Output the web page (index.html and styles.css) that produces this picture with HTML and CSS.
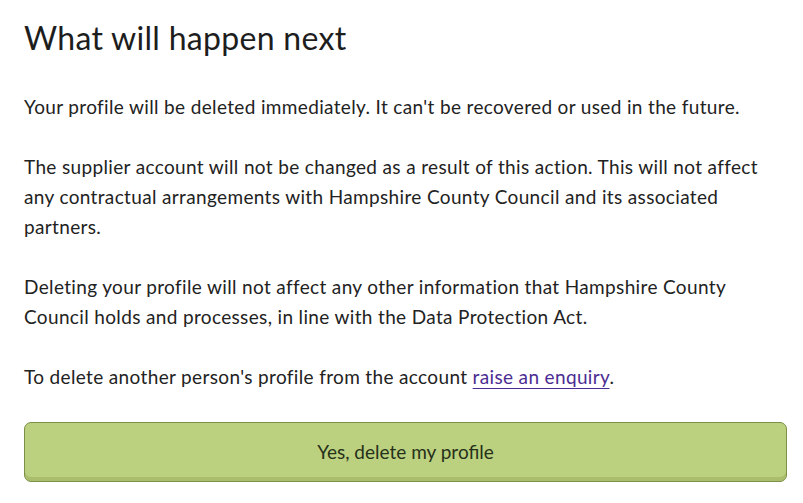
FILE: index.html
```html
<!DOCTYPE html>
<html lang="en">
<head>
<meta charset="utf-8">
<title>Delete profile</title>
<link rel="stylesheet" href="styles.css">
</head>
<body>
<main class="page">
  <h2 class="heading">What will happen next</h2>
  <p class="text">Your profile will be deleted immediately. It can't be recovered or used in the future.</p>
  <p class="text">The supplier account will not be changed as a result of this action. This will not affect any contractual arrangements with Hampshire County Council and its associated partners.</p>
  <p class="text">Deleting your profile will not affect any other information that Hampshire County Council holds and processes, in line with the Data Protection Act.</p>
  <p class="text">To delete another person's profile from the account <a class="link" href="#">raise an enquiry</a>.</p>
  <button class="btn" type="button">Yes, delete my profile</button>
</main>
</body>
</html>
```
FILE: styles.css
```css
html, body {
  margin: 0;
  padding: 0;
  background: #ffffff;
}
body {
  font-family: "Lato", "Liberation Sans", sans-serif;
  color: #222222;
}
.page {
  padding: 16px 16px 0 24px;
  display: flex;
  flex-direction: column;
}
.heading {
  font-size: 32px;
  font-weight: 400;
  letter-spacing: 0.3px;
  line-height: 44px;
  margin: 0 0 32px 0;
  color: #1d1d1d;
}
.text {
  font-size: 19px;
  letter-spacing: 0.35px;
  line-height: 30px;
  max-width: 738px;
  margin: 0 0 30px 0;
}
.link {
  color: #4c2c92;
  text-decoration: underline;
  text-underline-offset: 4px;
}
.btn {
  font-family: inherit;
  font-size: 19px;
  color: #26301a;
  background: #bcd17f;
  border: 1px solid #7d8f48;
  border-radius: 7px;
  height: 60px;
  padding-bottom: 2px;
  box-shadow: inset 0 -4px 0 #a9bd6c;
  cursor: pointer;
}
```
